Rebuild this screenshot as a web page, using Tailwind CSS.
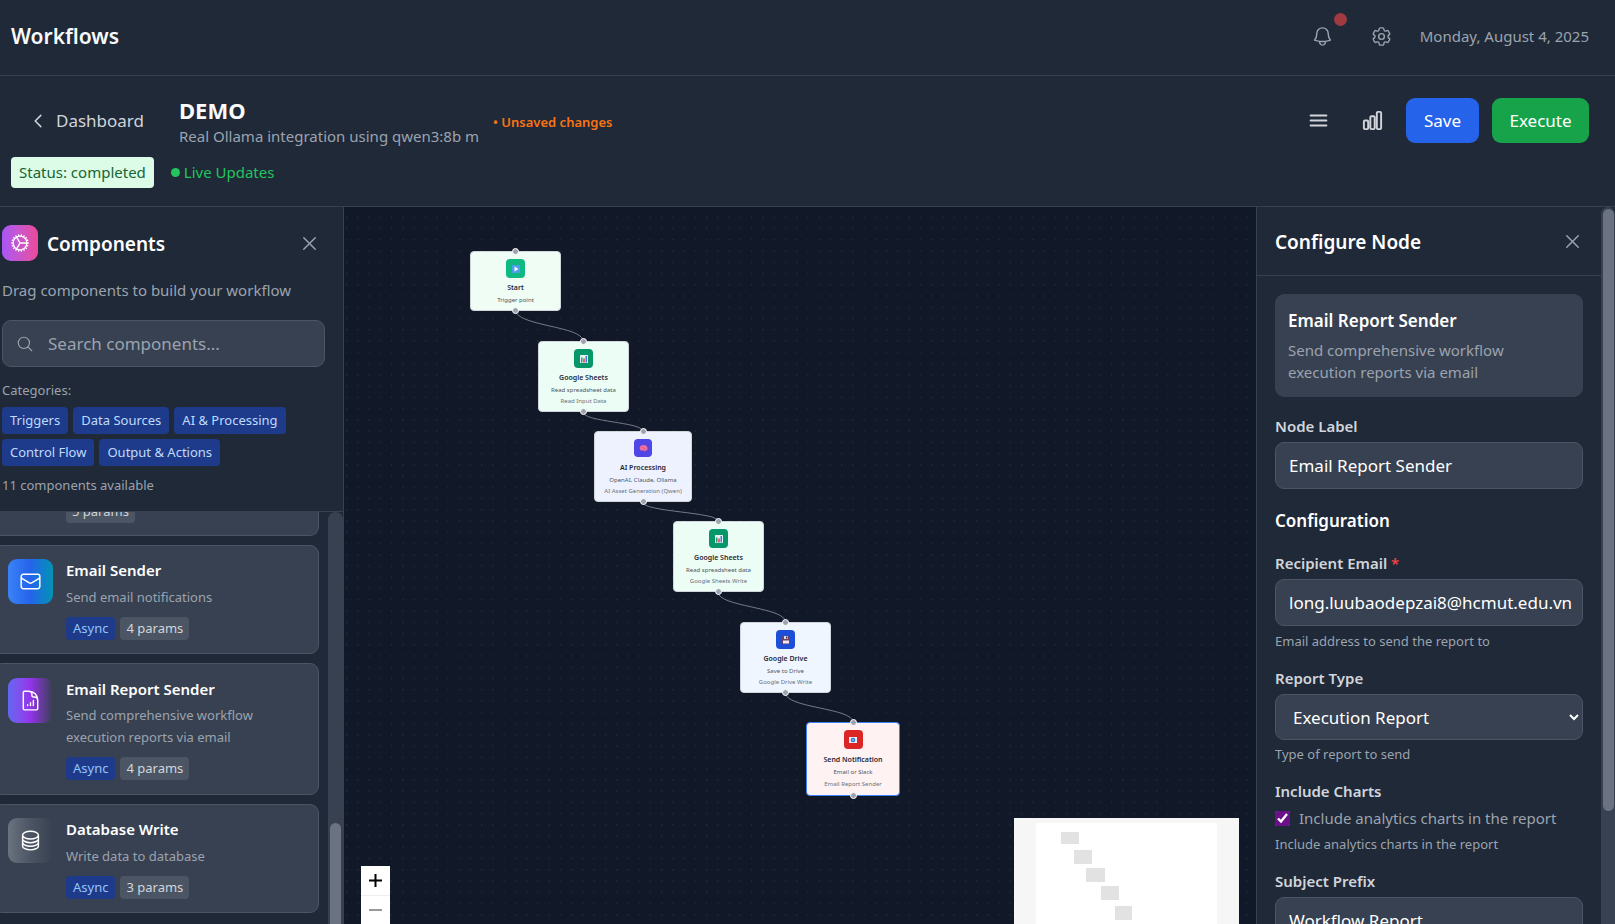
<!DOCTYPE html>
<html lang="en">
<head>
<meta charset="utf-8">
<title>Workflows</title>
<script src="https://cdn.jsdelivr.net/npm/@tailwindcss/browser@4"></script>
</head>
<body class="flex h-screen flex-col overflow-hidden bg-[#1f2937] font-['Noto_Sans','Open_Sans',sans-serif] text-[17px] leading-6 text-white">

<!-- Icon and marker definitions -->
<svg class="hidden" aria-hidden="true">
  <symbol id="i-x" viewBox="0 0 24 24"><path d="M6 18L18 6M6 6l12 12"/></symbol>
  <symbol id="i-mail" viewBox="0 0 24 24"><path d="M21.75 6.75v10.5a2.25 2.25 0 01-2.25 2.25h-15a2.25 2.25 0 01-2.25-2.25V6.75m19.5 0A2.25 2.25 0 0019.5 4.5h-15a2.25 2.25 0 00-2.25 2.25m19.5 0v.243a2.25 2.25 0 01-1.07 1.916l-7.5 4.615a2.25 2.25 0 01-2.36 0L3.32 8.91a2.25 2.25 0 01-1.07-1.916V6.75"/></symbol>
  <symbol id="i-sheet" viewBox="0 0 16 16">
    <rect width="16" height="16" rx="1" fill="#e8eef4"/><rect x="2" y="5" width="3" height="10" fill="#22a565"/><rect x="6.500" y="7" width="3" height="8" fill="#e5395f"/><rect x="11" y="2" width="3" height="13" fill="#3b82d6"/>
  </symbol>
</svg>

<header class="flex h-[76px] shrink-0 items-center justify-between border-b border-[#374151] pr-[26px] pb-[3px] pl-[11px]">
  <h1 class="text-[21px] font-semibold text-[#f9fafb]">Workflows</h1>
  <div class="flex items-center text-[#9ca3af]">
    <button class="relative mr-[36px]" aria-label="Notifications">
      <svg class="size-[23px]" viewBox="0 0 24 24" fill="none" stroke="currentColor" stroke-width="1.5" stroke-linecap="round" stroke-linejoin="round"><path d="M14.857 17.082a23.848 23.848 0 005.454-1.31A8.967 8.967 0 0118 9.750v-.7V9A6 6 0 006 9v.75a8.967 8.967 0 01-2.312 6.022c1.733.64 3.560 1.085 5.455 1.310m5.714 0a24.255 24.255 0 01-5.714 0m5.714 0a3 3 0 11-5.714 0"/></svg>
      <span class="absolute -top-[12px] -right-[13px] size-[13px] rounded-full bg-[#9f3a40]"></span>
    </button>
    <button class="mr-[27px]" aria-label="Settings">
      <svg class="size-[23px]" viewBox="0 0 24 24" fill="none" stroke="currentColor" stroke-width="1.5" stroke-linecap="round" stroke-linejoin="round"><path d="M9.594 3.940c.09-.542.56-.94 1.110-.94h2.593c.55 0 1.020.398 1.110.94l.213 1.281c.063.374.313.686.645.87.074.04.147.083.22.127.324.196.72.257 1.075.124l1.217-.456a1.125 1.125 0 011.370.49l1.296 2.247a1.125 1.125 0 01-.26 1.431l-1.003.827c-.293.24-.438.613-.431.992a6.759 6.759 0 010 .255c-.007.378.138.75.43.99l1.005.828c.424.35.534.954.26 1.430l-1.298 2.247a1.125 1.125 0 01-1.369.491l-1.217-.456c-.355-.133-.75-.072-1.076.124a6.570 6.570 0 01-.22.128c-.331.183-.581.495-.644.869l-.213 1.280c-.09.543-.56.941-1.110.941h-2.594c-.55 0-1.020-.398-1.110-.94l-.213-1.281c-.062-.374-.312-.686-.644-.87a6.520 6.520 0 01-.22-.127c-.325-.196-.72-.257-1.076-.124l-1.217.456a1.125 1.125 0 01-1.369-.49l-1.297-2.247a1.125 1.125 0 01.26-1.431l1.004-.827c.292-.24.437-.613.43-.992a6.932 6.932 0 010-.255c.007-.378-.138-.75-.43-.99l-1.004-.828a1.125 1.125 0 01-.26-1.430l1.297-2.247a1.125 1.125 0 011.370-.491l1.216.456c.356.133.751.072 1.076-.124.072-.044.146-.087.22-.128.332-.183.582-.495.644-.869l.214-1.281z"/><path d="M15 12a3 3 0 11-6 0 3 3 0 016 0z"/></svg>
    </button>
    <time datetime="2025-08-04" class="text-[15px]">Monday, August 4, 2025</time>
  </div>
</header>

<section class="h-[131px] shrink-0 border-b border-[#374151] pt-[22px] pr-[26px] pl-[11px]">
  <div class="flex items-start justify-between">
    <div class="flex h-[54px] items-center">
      <a href="#" class="mr-[35px] ml-[18px] flex items-center gap-[9px] pb-[8px] text-[#d1d5db]">
        <svg class="size-[18px]" viewBox="0 0 24 24" fill="none" stroke="currentColor" stroke-width="2" stroke-linecap="round" stroke-linejoin="round"><path d="M15.750 19.500L8.250 12l7.500-7.500"/></svg>
        Dashboard
      </a>
      <div class="mr-[14px] pb-[6px]">
        <h2 class="text-[22px] leading-[28px] font-bold text-[#f9fafb]">DEMO</h2>
        <p class="text-[15px] text-[#9ca3af]">Real Ollama integration using qwen3:8b m</p>
      </div>
      <span class="pb-[6px] text-[13px] font-semibold text-[#f97316]">• Unsaved changes</span>
    </div>
    <div class="flex items-center">
      <button class="mr-[31px] text-[#d1d5db]" aria-label="Menu"><svg class="size-[23px]" viewBox="0 0 24 24" fill="none" stroke="currentColor" stroke-width="2" stroke-linecap="round"><path d="M3.750 6.750h16.500M3.750 12h16.500m-16.500 5.250h16.500"/></svg></button>
      <button class="mr-[22px] text-[#d1d5db]" aria-label="Statistics"><svg class="size-[23px]" viewBox="0 0 24 24" fill="none" stroke="currentColor" stroke-width="2" stroke-linejoin="round"><path d="M3 13.125C3 12.504 3.504 12 4.125 12h2.250c.621 0 1.125.504 1.125 1.125v6.750C7.500 20.496 6.996 21 6.375 21h-2.250A1.125 1.125 0 013 19.875v-6.750zM9.750 8.625c0-.621.504-1.125 1.125-1.125h2.250c.621 0 1.125.504 1.125 1.125v11.250c0 .621-.504 1.125-1.125 1.125h-2.250a1.125 1.125 0 01-1.125-1.125V8.625zM16.500 4.125c0-.621.504-1.125 1.125-1.125h2.250C20.496 3 21 3.504 21 4.125v15.750c0 .621-.504 1.125-1.125 1.125h-2.250a1.125 1.125 0 01-1.125-1.125V4.125z"/></svg></button>
      <button class="mr-[13px] h-[45px] w-[73px] rounded-[9px] bg-[#2563eb]">Save</button>
      <button class="h-[45px] w-[97px] rounded-[9px] bg-[#16a34a]">Execute</button>
    </div>
  </div>
  <div class="mt-[5px] flex items-center">
    <span class="flex h-[31px] items-center rounded bg-[#dcfce7] px-[8px] pb-px text-[15px] text-[#166534]">Status: completed</span>
    <span class="ml-[17px] flex items-center gap-[4px] pb-px text-[15px] text-[#22c55e]"><i class="size-[9px] rounded-full bg-[#22c55e]"></i>Live Updates</span>
  </div>
</section>

<main class="flex min-h-0 flex-1">

  <!-- Component library -->
  <aside class="flex w-[344px] shrink-0 flex-col border-r border-[#374151]">
    <div class="shrink-0 border-b border-[#374151] pt-[18px] pr-[18px] pb-[14px] pl-[2px]">
      <div class="flex items-center">
        <span class="flex size-[36px] items-center justify-center rounded-[9px] bg-linear-to-r from-[#a855f7] to-[#ec4899]">
          <svg class="size-[22px]" viewBox="0 0 24 24" fill="none" stroke="currentColor" stroke-width="1.5" stroke-linecap="round" stroke-linejoin="round"><path d="M4.500 12a7.500 7.500 0 0015 0m-15 0a7.500 7.500 0 1115 0m-15 0H3m16.500 0H21m-1.500 0H12m-8.457 3.077l1.410-.513m14.095-5.130l1.410-.513M5.106 17.785l1.150-.964m11.490-9.642l1.149-.964M7.501 19.795l.75-1.300m7.500-12.990l.75-1.300m-6.063 16.658l.26-1.477m2.605-14.772l.26-1.477m0 17.726l-.26-1.477M10.698 4.614l-.26-1.477M16.500 19.794l-.75-1.299M7.500 4.205L12 12m6.894 5.785l-1.149-.964M6.256 7.178l-1.150-.964m15.352 8.864l-1.410-.513M4.954 9.435l-1.410-.514M12.002 12l-3.750 6.495"/></svg>
        </span>
        <h2 class="ml-[9px] pt-[2px] text-[19px] font-semibold">Components</h2>
        <button class="mr-[4px] ml-auto text-[#9ca3af]" aria-label="Close components"><svg class="size-[23px]" fill="none" stroke="currentColor" stroke-width="1.5" stroke-linecap="round"><use href="#i-x"/></svg></button>
      </div>
      <p class="mt-[18px] text-[15px] leading-[22px] text-[#9ca3af]">Drag components to build your workflow</p>
      <label class="mt-[19px] flex h-[47px] items-center gap-[14px] rounded-[9px] border border-[#4b5563] bg-[#374151] px-[13px] text-[#9ca3af]">
        <svg class="size-[18px] shrink-0" viewBox="0 0 24 24" fill="none" stroke="currentColor" stroke-width="1.5" stroke-linecap="round"><path d="M21 21l-5.197-5.197m0 0A7.500 7.500 0 105.196 5.196a7.500 7.500 0 0010.607 10.607z"/></svg>
        <input type="search" aria-label="Search components" placeholder="Search components..." class="w-full min-w-0 bg-transparent outline-none placeholder:text-[#9ca3af]">
      </label>
      <p class="mt-[13px] text-[13px] leading-[20px] text-[#9ca3af]">Categories:</p>
      <div class="mt-[7px] flex flex-wrap gap-[5px] text-[13px] leading-[27px] text-[#bfdbfe]">
        <span class="rounded bg-[#1e3a8a] px-[8px]">Triggers</span>
        <span class="rounded bg-[#1e3a8a] px-[8px]">Data Sources</span>
        <span class="rounded bg-[#1e3a8a] px-[8px]">AI &amp; Processing</span>
        <span class="rounded bg-[#1e3a8a] px-[8px]">Control Flow</span>
        <span class="rounded bg-[#1e3a8a] px-[8px]">Output &amp; Actions</span>
      </div>
      <p class="mt-[8px] pb-px text-[13px] leading-[22px] text-[#9ca3af]">11 components available</p>
    </div>
    <div class="flex min-h-0 flex-1 overflow-hidden">
      <div class="-mt-[14px] -ml-[7px] flex flex-1 flex-col gap-[9px] pr-[9px]">
        <article class="shrink-0 rounded-b-[9px] border border-t-0 border-[#4b5563] bg-[#374151] pb-[12px] pl-[72px]">
          <span class="inline-block rounded bg-[#4b5563] px-[6px] text-[13px] leading-[23px] text-[#d1d5db]">5 params</span>
        </article>
        <article class="flex shrink-0 gap-[13px] rounded-[9px] border border-[#4b5563] bg-[#374151] p-[13px] pl-[14px]">
          <span class="flex size-[45px] shrink-0 items-center justify-center rounded-[9px] bg-linear-to-r from-[#3b82f6] via-[#2563eb] to-[#0891b2]"><svg class="size-[23px]" fill="none" stroke="currentColor" stroke-width="1.5" stroke-linecap="round" stroke-linejoin="round"><use href="#i-mail"/></svg></span>
          <div>
            <h3 class="text-[15px] leading-[22px] font-semibold">Email Sender</h3>
            <p class="mt-[5px] text-[13px] leading-[22px] text-[#9ca3af]">Send email notifications</p>
            <div class="mt-[9px] flex gap-[5px] text-[13px] leading-[23px]"><span class="rounded bg-[#1e3a8a] px-[7px] text-[#93c5fd]">Async</span><span class="rounded bg-[#4b5563] px-[6px] text-[#d1d5db]">4 params</span></div>
          </div>
        </article>
        <article class="flex shrink-0 gap-[13px] rounded-[9px] border border-[#4b5563] bg-[#374151] p-[14px]">
          <span class="flex size-[45px] shrink-0 items-center justify-center rounded-[9px] bg-linear-to-r from-[#6366f1] via-[#9333ea] to-[#9333ea]/0"><svg class="size-[23px]" viewBox="0 0 24 24" fill="none" stroke="currentColor" stroke-width="1.5" stroke-linecap="round" stroke-linejoin="round"><path d="M19.500 14.250v-2.625a3.375 3.375 0 00-3.375-3.375h-1.500A1.125 1.125 0 0113.500 7.125v-1.500a3.375 3.375 0 00-3.375-3.375H8.250M9 16.500v.75m3-3v3M15 12v5.250m-4.500-15H5.625c-.621 0-1.125.504-1.125 1.125v17.250c0 .621.504 1.125 1.125 1.125h12.750c.621 0 1.125-.504 1.125-1.125V11.250a9 9 0 00-9-9z"/></svg></span>
          <div>
            <h3 class="text-[15px] leading-[22px] font-semibold">Email Report Sender</h3>
            <p class="mt-[4px] text-[13px] leading-[22px] text-[#9ca3af]">Send comprehensive workflow<br>execution reports via email</p>
            <div class="mt-[9px] flex gap-[5px] text-[13px] leading-[23px]"><span class="rounded bg-[#1e3a8a] px-[7px] text-[#93c5fd]">Async</span><span class="rounded bg-[#4b5563] px-[6px] text-[#d1d5db]">4 params</span></div>
          </div>
        </article>
        <article class="flex shrink-0 gap-[13px] rounded-[9px] border border-[#4b5563] bg-[#374151] p-[13px] pl-[14px]">
          <span class="flex size-[45px] shrink-0 items-center justify-center rounded-[9px] bg-linear-to-r from-[#6b7280] via-[#4b5563] to-[#4b5563]/0"><svg class="size-[23px]" viewBox="0 0 24 24" fill="none" stroke="currentColor" stroke-width="1.5" stroke-linecap="round" stroke-linejoin="round"><path d="M20.250 6.375c0 2.278-3.694 4.125-8.250 4.125S3.750 8.653 3.750 6.375m16.500 0c0-2.278-3.694-4.125-8.250-4.125S3.750 4.097 3.750 6.375m16.500 0v11.250c0 2.278-3.694 4.125-8.250 4.125s-8.250-1.847-8.250-4.125V6.375m16.500 0v3.750m-16.500-3.750v3.750m16.500 0v3.750C20.250 16.153 16.556 18 12 18s-8.250-1.847-8.250-4.125v-3.750m16.500 0c0 2.278-3.694 4.125-8.250 4.125s-8.250-1.847-8.250-4.125"/></svg></span>
          <div>
            <h3 class="text-[15px] leading-[22px] font-semibold">Database Write</h3>
            <p class="mt-[5px] text-[13px] leading-[22px] text-[#9ca3af]">Write data to database</p>
            <div class="mt-[9px] flex gap-[5px] text-[13px] leading-[23px]"><span class="rounded bg-[#1e3a8a] px-[7px] text-[#93c5fd]">Async</span><span class="rounded bg-[#4b5563] px-[6px] text-[#d1d5db]">3 params</span></div>
          </div>
        </article>
      </div>
      <div class="flex w-[15px] shrink-0 flex-col justify-end rounded-t-full bg-[#374151] px-[2px]"><div class="h-[101px] rounded-t-full bg-[#6b7280]"></div></div>
    </div>
  </aside>

  <!-- Workflow canvas -->
  <section class="relative min-w-0 flex-1 overflow-hidden bg-[#111827] text-[#1f2937]" aria-label="Workflow canvas">
    <svg class="absolute inset-0 size-full" fill="none">
      <defs><pattern id="dots" x="2" y="9.500" width="11.250" height="11.250" patternUnits="userSpaceOnUse"><circle cx="0.750" cy="0.750" r="0.560" fill="#374151"/></pattern></defs>
      <rect width="100%" height="100%" fill="url(#dots)"/>
      <g stroke="#9ca3af" stroke-opacity="0.700">
        <path d="M171.500 103C171.500 119 239 119 239 134"/>
        <path d="M239 205C239 215 298.500 215 298.500 224"/>
        <path d="M298.500 295C298.500 305 374 305 374 314"/>
        <path d="M374 385C374 400 441.500 400 441.500 415"/>
        <path d="M441.500 486C441.500 501 509 501 509 515"/>
      </g>
    </svg>

    <article class="absolute top-[44px] left-[126px] flex h-[60px] w-[91px] flex-col items-center rounded border border-[#d1d5db] bg-[#f0fdf4] pt-[7px]">
      <span class="flex size-[19px] items-center justify-center rounded bg-[#10b981]"><svg class="size-[8px]" viewBox="0 0 16 16"><rect width="16" height="16" rx="2" fill="#4f9df0"/><path d="M5 3l8 5-8 5z" fill="#fff"/></svg></span>
      <h4 class="mt-[4px] text-[7px] leading-[12px] font-semibold">Start</h4>
      <p class="text-[6px] leading-[12px] text-[#4b5563]">Trigger point</p>
      <i class="absolute -top-[4px] left-[41px] size-[7px] rounded-full border border-white bg-[#9ca3af]"></i><i class="absolute -bottom-[4px] left-[41px] size-[7px] rounded-full border border-white bg-[#9ca3af]"></i>
    </article>

    <article class="absolute top-[134px] left-[194px] flex h-[71px] w-[91px] flex-col items-center rounded border border-[#d1d5db] bg-[#ecfdf5] pt-[7px]">
      <span class="flex size-[19px] items-center justify-center rounded bg-[#059669]"><svg class="size-[8px]"><use href="#i-sheet"/></svg></span>
      <h4 class="mt-[4px] text-[7px] leading-[12px] font-semibold">Google Sheets</h4>
      <p class="text-[6px] leading-[12px] text-[#4b5563]">Read spreadsheet data</p>
      <p class="text-[6px] leading-[11px] text-[#6b7280]">Read Input Data</p>
      <i class="absolute -top-[4px] left-[41px] size-[7px] rounded-full border border-white bg-[#9ca3af]"></i><i class="absolute -bottom-[4px] left-[41px] size-[7px] rounded-full border border-white bg-[#9ca3af]"></i>
    </article>

    <article class="absolute top-[224px] left-[250px] flex h-[71px] w-[98px] flex-col items-center rounded border border-[#d1d5db] bg-[#eef2ff] pt-[7px]">
      <span class="flex size-[18px] items-center justify-center rounded bg-[#4f46e5]"><svg class="size-[9px]" viewBox="0 0 18 16"><path d="M2 9C0 5 4 1 8 1.500c4-1.500 9 1.500 9 6 1 3-2 5-4 4l-1 3-3-3C6 13 3 12 2 9z" fill="#f472a0"/><path d="M4 7c2-2 3 1 5-2m-1 5c2-3 4 0 6-3M9 2l1 2" fill="none" stroke="#c8407c"/></svg></span>
      <h4 class="mt-[5px] text-[7px] leading-[12px] font-semibold">AI Processing</h4>
      <p class="text-[6px] leading-[12px] text-[#4b5563]">OpenAI, Claude, Ollama</p>
      <p class="text-[6px] leading-[11px] whitespace-nowrap text-[#6b7280]">AI Asset Generation (Qwen)</p>
      <i class="absolute -top-[4px] left-[45px] size-[7px] rounded-full border border-white bg-[#9ca3af]"></i><i class="absolute -bottom-[4px] left-[45px] size-[7px] rounded-full border border-white bg-[#9ca3af]"></i>
    </article>

    <article class="absolute top-[314px] left-[329px] flex h-[71px] w-[91px] flex-col items-center rounded border border-[#d1d5db] bg-[#ecfdf5] pt-[7px]">
      <span class="flex size-[19px] items-center justify-center rounded bg-[#059669]"><svg class="size-[8px]"><use href="#i-sheet"/></svg></span>
      <h4 class="mt-[4px] text-[7px] leading-[12px] font-semibold">Google Sheets</h4>
      <p class="text-[6px] leading-[12px] text-[#4b5563]">Read spreadsheet data</p>
      <p class="text-[6px] leading-[11px] text-[#6b7280]">Google Sheets Write</p>
      <i class="absolute -top-[4px] left-[41px] size-[7px] rounded-full border border-white bg-[#9ca3af]"></i><i class="absolute -bottom-[4px] left-[41px] size-[7px] rounded-full border border-white bg-[#9ca3af]"></i>
    </article>

    <article class="absolute top-[415px] left-[396px] flex h-[71px] w-[91px] flex-col items-center rounded border border-[#d1d5db] bg-[#eff6ff] pt-[7px]">
      <span class="flex size-[19px] items-center justify-center rounded bg-[#1d4ed8]"><svg class="size-[8px]" viewBox="0 0 16 16"><rect width="16" height="16" rx="1" fill="#6b3f63"/><path d="M4 0h8v6H4z" fill="#d9dce8"/><path d="M8 1h3v4H8z" fill="#443056"/><path d="M2 9h12v6H2z" fill="#f3e8ee"/></svg></span>
      <h4 class="mt-[4px] text-[7px] leading-[12px] font-semibold">Google Drive</h4>
      <p class="text-[6px] leading-[12px] text-[#4b5563]">Save to Drive</p>
      <p class="text-[6px] leading-[11px] text-[#6b7280]">Google Drive Write</p>
      <i class="absolute -top-[4px] left-[41px] size-[7px] rounded-full border border-white bg-[#9ca3af]"></i><i class="absolute -bottom-[4px] left-[41px] size-[7px] rounded-full border border-white bg-[#9ca3af]"></i>
    </article>

    <article class="absolute top-[515px] left-[462px] flex h-[74px] w-[94px] flex-col items-center rounded border border-[#3b82f6] bg-[#fef2f2] pt-[7px]">
      <span class="flex size-[19px] items-center justify-center rounded bg-[#dc2626]"><svg class="h-[6px] w-[8px]" viewBox="0 0 16 12"><rect width="16" height="12" fill="#e3ecf8"/><circle cx="8" cy="6" r="4.500" fill="#2f74d0"/><circle cx="8" cy="6" r="1.800" fill="#a9cdf5"/></svg></span>
      <h4 class="mt-[5px] text-[7px] leading-[12px] font-semibold">Send Notification</h4>
      <p class="text-[6px] leading-[12px] text-[#4b5563]">Email or Slack</p>
      <p class="text-[6px] leading-[12px] text-[#6b7280]">Email Report Sender</p>
      <i class="absolute -top-[4px] left-[43px] size-[7px] rounded-full border border-white bg-[#9ca3af]"></i><i class="absolute -bottom-[4px] left-[43px] size-[7px] rounded-full border border-white bg-[#9ca3af]"></i>
    </article>

    <div class="absolute top-[659px] left-[17px] w-[29px] bg-white">
      <button class="flex h-[30px] w-full items-center justify-center border-b border-[#eeeeee]" aria-label="Zoom in"><svg class="size-[13px]" viewBox="0 0 13 13" stroke="#000" stroke-width="2"><path d="M0 6.500h13M6.500 0v13"/></svg></button>
      <button class="flex h-[30px] w-full items-center justify-center" disabled aria-label="Zoom out"><svg class="size-[13px]" viewBox="0 0 13 13" stroke="#999" stroke-width="2"><path d="M0 5h13"/></svg></button>
    </div>

    <svg class="absolute top-[611px] right-[17px] h-[169px] w-[225px] bg-[#f6f6f6]" role="img" aria-label="Minimap">
      <rect x="22" y="5" width="181" height="160" fill="#fff"/>
      <g fill="#e2e2e2"><rect x="47" y="14" width="18" height="12"/><rect x="60" y="32" width="18" height="14"/><rect x="72" y="50" width="19" height="14"/><rect x="87" y="68" width="18" height="14"/><rect x="101" y="88" width="17" height="14"/></g>
    </svg>
  </section>

  <!-- Node configuration -->
  <aside class="flex w-[359px] shrink-0 overflow-hidden border-l border-[#374151]">
    <div class="min-w-0 flex-1">
      <div class="flex h-[69px] items-center justify-between border-b border-[#374151] pr-[17px] pl-[18px]">
        <h2 class="pt-[2px] text-[19px] font-semibold">Configure Node</h2>
        <button class="text-[#9ca3af]" aria-label="Close configuration"><svg class="size-[23px]" fill="none" stroke="currentColor" stroke-width="1.5" stroke-linecap="round"><use href="#i-x"/></svg></button>
      </div>
      <form class="flex flex-col p-[18px]">
        <div class="rounded-[9px] bg-[#374151] px-[13px] pt-[15px] pb-[14px]">
          <h3 class="font-semibold">Email Report Sender</h3>
          <p class="mt-[6px] text-[15px] leading-[22px] text-[#9ca3af]">Send comprehensive workflow<br>execution reports via email</p>
        </div>
        <label for="node-label" class="mt-[18px] text-[15px] leading-[22px] font-semibold text-[#d1d5db]">Node Label</label>
        <input id="node-label" value="Email Report Sender" class="mt-[5px] h-[47px] rounded-[9px] border border-[#4b5563] bg-[#374151] pr-[4px] pl-[13px]">
        <h3 class="mt-[20px] font-semibold">Configuration</h3>
        <label for="recipient" class="mt-[19px] text-[15px] leading-[22px] font-semibold text-[#d1d5db]">Recipient Email <span class="text-[#ef4444]">*</span></label>
        <input id="recipient" value="long.luubaodepzai8@hcmut.edu.vn" class="mt-[5px] h-[47px] rounded-[9px] border border-[#4b5563] bg-[#374151] pr-[4px] pl-[13px]">
        <p class="mt-[6px] text-[13px] leading-[18px] text-[#9ca3af]">Email address to send the report to</p>
        <label for="report-type" class="mt-[17px] text-[15px] leading-[22px] font-semibold text-[#d1d5db]">Report Type</label>
        <select id="report-type" class="mt-[5px] h-[46px] rounded-[9px] border border-[#4b5563] bg-[#374151] px-[13px]"><option>Execution Report</option></select>
        <p class="mt-[5px] text-[13px] leading-[18px] text-[#9ca3af]">Type of report to send</p>
        <span class="mt-[17px] text-[15px] leading-[22px] font-semibold text-[#d1d5db]">Include Charts</span>
        <label class="mt-[5px] flex items-center gap-[9px] text-[15px] leading-[22px] text-[#9ca3af]"><input type="checkbox" checked class="size-[15px] accent-[#6b0f8a]">Include analytics charts in the report</label>
        <p class="mt-[6px] text-[13px] leading-[18px] text-[#9ca3af]">Include analytics charts in the report</p>
        <label for="prefix" class="mt-[17px] text-[15px] leading-[22px] font-semibold text-[#d1d5db]">Subject Prefix</label>
        <input id="prefix" value="Workflow Report" class="mt-[5px] h-[47px] rounded-[9px] border border-[#4b5563] bg-[#374151] pr-[4px] pl-[13px]">
      </form>
    </div>
    <div class="w-[14px] shrink-0 rounded-t-full bg-[#374151] py-[2px] pr-px pl-[2px]"><div class="h-[602px] rounded-full bg-[#6b7280]"></div></div>
  </aside>
</main>
</body>
</html>
